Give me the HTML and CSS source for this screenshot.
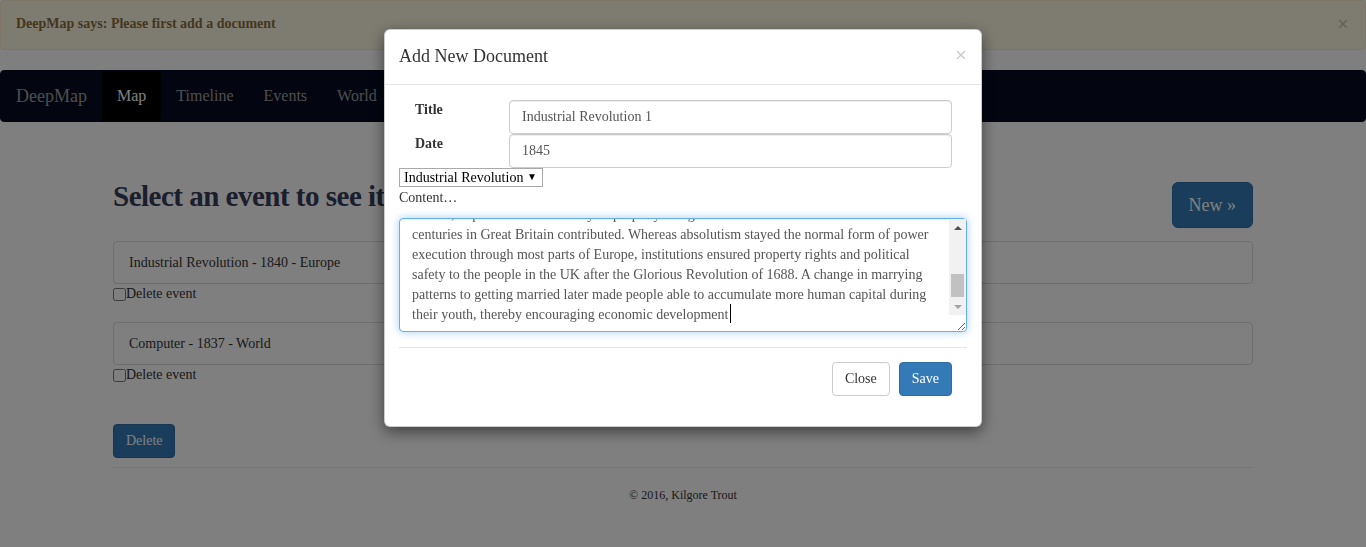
FILE: index.html
```html
<!DOCTYPE html>
<html lang="en">
<head>
<meta charset="utf-8">
<title>DeepMap</title>
<link rel="stylesheet" href="styles.css">
</head>
<body>
<div class="alert">
  <span>DeepMap says: Please first add a document</span>
  <span class="alert-close">×</span>
</div>
<nav class="navbar">
  <a class="brand">DeepMap</a>
  <ul class="nav">
    <li class="active"><a>Map</a></li>
    <li><a>Timeline</a></li>
    <li><a>Events</a></li>
    <li><a>World</a></li>
  </ul>
</nav>
<main class="container">
  <div class="head-row">
    <h2>Select an event to see its</h2>
    <button class="btn btn-primary btn-lg">New »</button>
  </div>
  <div class="event">
    <div class="list-item">Industrial Revolution - 1840 - Europe</div>
    <label class="check"><input type="checkbox">Delete event</label>
  </div>
  <div class="event">
    <div class="list-item">Computer - 1837 - World</div>
    <label class="check"><input type="checkbox">Delete event</label>
  </div>
  <button class="btn btn-primary delete">Delete</button>
  <hr class="page-hr">
  <footer class="footer">© 2016, Kilgore Trout</footer>
</main>

<div class="backdrop"></div>
<div class="modal-wrap">
  <div class="modal">
    <div class="modal-header">
      <h4 class="modal-title">Add New Document</h4>
      <span class="modal-close">×</span>
    </div>
    <div class="modal-body">
      <div class="form-row">
        <label class="form-label">Title</label>
        <input class="form-control" type="text" value="Industrial Revolution 1">
      </div>
      <div class="form-row">
        <label class="form-label">Date</label>
        <input class="form-control" type="text" value="1845">
      </div>
      <div class="select-wrap">
        <select class="plain-select">
          <option>Industrial Revolution</option>
          <option>Computer</option>
        </select>
      </div>
      <div class="content-label">Content…</div>
      <div class="area-wrap">
        <textarea class="form-control content-area" id="content">The Industrial Revolution was the transition to new manufacturing processes in the period
from about 1760 to sometime between 1820 and 1840. This transition included going from
hand production methods to machines, new chemical manufacturing and iron production
processes, improved efficiency of water power, the increasing use of steam power, and the
development of machine tools. It also included the change from wood and other bio-fuels
to coal. Textiles were the dominant industry of the Industrial Revolution in terms of
employment, value of output and capital invested. Regarding the causes of the Industrial
Revolution, historians point to several factors. Favourable institutional developments in
Britain, in particular the security of property and growth of trade in the 17th and 18th
centuries in Great Britain contributed. Whereas absolutism stayed the normal form of power
execution through most parts of Europe, institutions ensured property rights and political
safety to the people in the UK after the Glorious Revolution of 1688. A change in marrying
patterns to getting married later made people able to accumulate more human capital during
their youth, thereby encouraging economic development</textarea>
        <div class="fake-scroll" aria-hidden="true">
          <div class="sb-btn">
            <svg width="8" height="4" viewBox="0 0 8 4"><path d="M4 0L8 4H0z" fill="#505050"/></svg>
          </div>
          <div class="sb-track"><div class="sb-thumb"></div></div>
          <div class="sb-btn">
            <svg width="8" height="4" viewBox="0 0 8 4"><path d="M0 0H8L4 4z" fill="#a3a3a3"/></svg>
          </div>
        </div>
        <span class="caret" aria-hidden="true"></span>
      </div>
      <hr class="modal-hr">
    </div>
    <div class="modal-footer">
      <button class="btn btn-default">Close</button>
      <button class="btn btn-primary">Save</button>
    </div>
  </div>
</div>
<script src="script.js"></script>
</body>
</html>
```

FILE: styles.css
```css
* { box-sizing: border-box; }
html, body {
  margin: 0;
  padding: 0;
  background: #fff;
  color: #333;
  font-family: "Liberation Serif", "Times New Roman", serif;
  font-size: 14px;
  line-height: 20px;
}

.alert {
  display: flex;
  justify-content: space-between;
  align-items: center;
  height: 50px;
  padding: 13px 16px 15px 15px;
  background: #fcf8e3;
  border: 1px solid #faebcc;
  border-radius: 4px;
  color: #8a6d3b;
  font-weight: bold;
  margin-bottom: 20px;
}
.alert-close {
  font-size: 21px;
  font-weight: bold;
  color: #000;
  opacity: .2;
  line-height: 1;
}

.navbar {
  display: flex;
  align-items: stretch;
  height: 52px;
  background: #060c20;
  border: 1px solid #060c20;
  border-radius: 4px;
}
.brand {
  padding: 0 15px;
  font-size: 18px;
  line-height: 50px;
  color: #9d9d9d;
}
.nav {
  display: flex;
  list-style: none;
  margin: 0;
  padding: 0;
}
.nav a {
  display: block;
  padding: 0 15px;
  font-size: 16px;
  line-height: 50px;
  color: #9d9d9d;
}
.nav .active a {
  background: #000;
  color: #fff;
}

.container {
  width: 1170px;
  margin: 0 auto;
  padding: 58px 15px 0;
}
.head-row {
  display: flex;
  justify-content: space-between;
  align-items: flex-start;
  margin-bottom: 13px;
}
.head-row h2 {
  margin: 0;
  font-size: 29px;
  letter-spacing: -0.5px;
  line-height: 33px;
  font-weight: bold;
  color: #363c58;
}
.btn {
  display: inline-block;
  font-family: "Liberation Serif", "Times New Roman", serif;
  font-size: 14px;
  line-height: 20px;
  padding: 6px 12px;
  border: 1px solid transparent;
  border-radius: 4px;
  height: 34px;
  cursor: pointer;
}
.btn-primary {
  background: #337ab7;
  border-color: #2e6da4;
  color: #fff;
}
.btn-default {
  background: #fff;
  border-color: #ccc;
  color: #333;
}
.btn-lg {
  font-size: 18px;
  line-height: 24px;
  padding: 10px 16px;
  height: 46px;
  border-radius: 6px;
  margin-top: 2px;
}

.list-item {
  border: 1px solid #ddd;
  border-radius: 4px;
  padding: 11px 15px 10px;
  background: #fff;
}
.check {
  display: flex;
  align-items: center;
  line-height: 18px;
  height: 18px;
  margin-top: 1px;
}
.check input {
  margin: 0;
  width: 13px;
  height: 13px;
}
.event { margin-bottom: 19px; }
.event + .event { margin-bottom: 40px; }
.delete { width: 62px; }
.page-hr {
  margin: 9px 0 0;
  border: 0;
  border-top: 1px solid #eee;
}
.footer {
  margin-top: 19px;
  text-align: center;
  font-size: 12px;
  line-height: 17px;
}

.backdrop {
  position: fixed;
  inset: 0;
  background: rgba(0, 0, 0, .5);
  z-index: 10;
}
.modal-wrap {
  position: fixed;
  inset: 0;
  z-index: 20;
}
.modal {
  width: 598px;
  margin: 29px auto 0;
  background: #fff;
  border: 1px solid rgba(0, 0, 0, .2);
  border-radius: 6px;
  box-shadow: 0 5px 15px rgba(0, 0, 0, .5);
}
.modal-header {
  display: flex;
  justify-content: space-between;
  align-items: flex-start;
  padding: 13px 14px 15px 14px;
  border-bottom: 1px solid #e5e5e5;
}
.modal-title {
  margin: 0;
  font-size: 18px;
  line-height: 26px;
  font-weight: normal;
  color: #333;
}
.modal-close {
  font-size: 21px;
  line-height: 21px;
  font-weight: bold;
  color: #000;
  opacity: .2;
  margin-top: 2px;
}
.modal-body {
  padding: 15px 14px 0;
}
.form-row {
  display: flex;
  height: 34px;
}
.form-label {
  width: 110px;
  padding-left: 16px;
  font-weight: bold;
  line-height: 19px;
}
.form-row .form-control {
  width: 443px;
}
.form-control {
  display: block;
  height: 34px;
  padding: 6px 12px;
  font-family: "Liberation Serif", "Times New Roman", serif;
  font-size: 14px;
  line-height: 20px;
  color: #555;
  background: #fff;
  border: 1px solid #ccc;
  border-radius: 4px;
  box-shadow: inset 0 1px 1px rgba(0, 0, 0, .075);
}
.select-wrap {
  position: relative;
  display: inline-block;
  height: 19px;
}
.plain-select {
  -webkit-appearance: none;
  appearance: none;
  height: 19px;
  width: 144px;
  padding: 0 0 0 4px;
  font-family: "Liberation Serif", "Times New Roman", serif;
  font-size: 14px;
  line-height: 17px;
  color: #000;
  background: #fff;
  border: 1px solid #a9a9a9;
  border-radius: 0;
}
.select-wrap::after {
  content: "▼";
  position: absolute;
  right: 6px;
  top: 4px;
  font-size: 10px;
  line-height: 10px;
  color: #000;
  pointer-events: none;
}
.content-label {
  line-height: 20px;
}
.area-wrap {
  position: relative;
  margin-top: 10px;
}
.content-area {
  width: 568px;
  height: 114px;
  padding-right: 29px;
  resize: vertical;
  white-space: pre-wrap;
  overflow-y: scroll;
  scrollbar-width: none;
  border-color: #66afe9;
  outline: 0;
  box-shadow: inset 0 1px 1px rgba(0, 0, 0, .075), 0 0 8px rgba(102, 175, 233, .6);
}
.content-area:focus {
  border-color: #66afe9;
  outline: 0;
}
.fake-scroll {
  position: absolute;
  top: 1px;
  right: 1px;
  width: 17px;
  height: 96px;
  display: flex;
  flex-direction: column;
  background: #f1f1f1;
}
.sb-btn {
  height: 17px;
  display: flex;
  align-items: center;
  justify-content: center;
  flex: none;
}
.sb-track {
  flex: 1;
  display: flex;
  flex-direction: column;
  justify-content: flex-end;
  padding: 0 2px 1px;
}
.sb-thumb {
  height: 23px;
  background: #c1c1c1;
}
.caret {
  position: absolute;
  left: 331px;
  top: 86px;
  width: 1px;
  height: 19px;
  background: #000;
}
.modal-hr {
  margin: 15px 0 0;
  border: 0;
  border-top: 1px solid #e5e5e5;
}
.modal-footer {
  display: flex;
  justify-content: flex-end;
  gap: 9px;
  padding: 14px 29px 30px 15px;
}
```

FILE: script.js
```js
var ta = document.getElementById('content');
ta.setSelectionRange(ta.value.length, ta.value.length);
ta.scrollTop = ta.scrollHeight;
```
